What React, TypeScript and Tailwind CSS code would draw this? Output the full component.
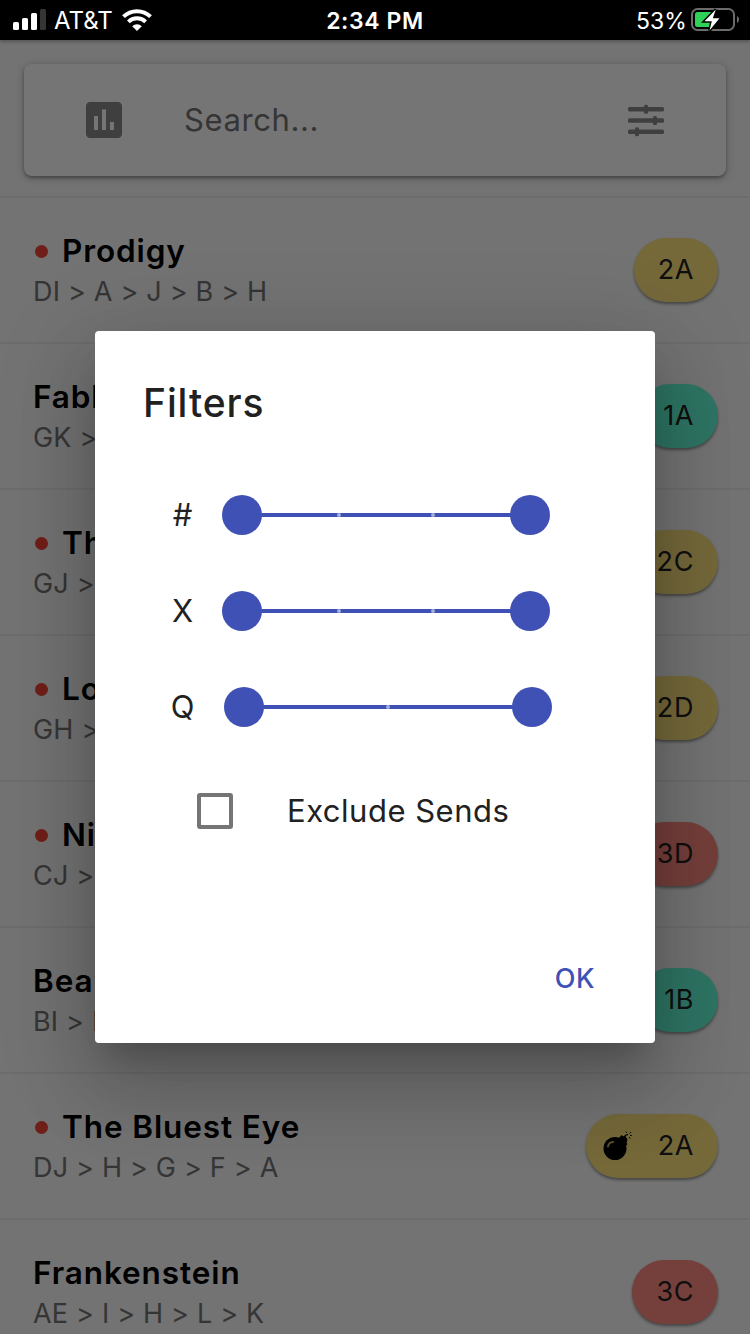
import React from "react";

type Route = { title: string; path: string; fresh?: boolean; grade: string; tone: string; width: string; bomb?: boolean };

const YELLOW = "bg-[#ffe57f]";
const TEAL = "bg-[#64ffda]";
const RED = "bg-[#ff8a80]";

const routes: Route[] = [
  { title: "Prodigy", path: "DI > A > J > B > H", fresh: true, grade: "2A", tone: YELLOW, width: "w-[84px]" },
  { title: "Fabl", path: "GK >", grade: "1A", tone: TEAL, width: "w-[80px]" },
  { title: "Th", path: "GJ >", fresh: true, grade: "2C", tone: YELLOW, width: "w-[86px]" },
  { title: "Lo", path: "GH >", fresh: true, grade: "2D", tone: YELLOW, width: "w-[86px]" },
  { title: "Ni", path: "CJ >", fresh: true, grade: "3D", tone: RED, width: "w-[86px]" },
  { title: "Beau", path: "BI > H", grade: "1B", tone: TEAL, width: "w-[80px]" },
  { title: "The Bluest Eye", path: "DJ > H > G > F > A", fresh: true, grade: "2A", tone: YELLOW, width: "w-[132px]", bomb: true },
  { title: "Frankenstein", path: "AE > I > H > L > K", grade: "3C", tone: RED, width: "w-[86px]" },
];

function StatusBar() {
  return (
    <header className="relative z-20 flex h-10 shrink-0 items-center justify-between bg-black text-white shadow-[0_2px_3px_rgba(0,0,0,0.25)]">
      <div className="flex items-center pl-[13px]">
        <svg width="33" height="22" viewBox="0 0 33 22" fill="#fff">
          <rect x="0" y="13" width="6" height="8" rx="1.5" />
          <rect x="9" y="9" width="6" height="12" rx="1.5" />
          <rect x="18" y="4" width="6" height="17" rx="1.5" />
          <rect x="27" y="0" width="6" height="21" rx="1.5" fill="#353535" />
        </svg>
        <span className="ml-2 w-[59px] pt-0.5 text-[24px] leading-[38px]">AT&amp;T</span>
        <svg className="ml-[9px]" width="30" height="22" viewBox="0 0 30 22" fill="none" stroke="#fff">
          <path d="M1.5 7.7a19.2 19.2 0 0 1 27 0" strokeWidth="4" />
          <path d="M6.4 12.9a12 12 0 0 1 17.2 0" strokeWidth="3.8" />
          <path d="M10.2 17.2a6.800 6.800 0 0 1 9.600 0L15 22z" fill="#fff" stroke="none" />
        </svg>
      </div>
      <div className="flex items-center pr-[11px]">
        <span className="pt-0.5 text-[23px] leading-[38px] tracking-[0.1px]">53%</span>
        <svg className="ml-1" width="48" height="24" viewBox="0 0 48 24">
          <rect x="1" y="1" width="42" height="21" rx="5.5" fill="none" stroke="#6b6b6b" strokeWidth="2" />
          <rect x="4" y="4" width="18" height="15" rx="2.5" fill="#30d158" />
          <path d="M46 8c1.5.7 2 2 2 3.5s-.5 2.8-2 3.5z" fill="#6b6b6b" />
          <path d="M24.8 1.5 13.5 13.3h7.3L18.5 22.5 28.5 10.3h-6.7z" fill="#fff" stroke="#000" strokeWidth="3" paintOrder="stroke" />
        </svg>
      </div>
      <div className="absolute inset-x-0 top-px text-center text-[23px] font-semibold leading-10 tracking-[0.6px]">2:34 PM</div>
    </header>
  );
}

function Bomb() {
  return (
    <svg width="30" height="30" viewBox="0 0 30 30">
      <circle cx="13" cy="17.500" r="11.500" />
      <path d="m17 7 2.500-3 1.800 1.500 1.700-1.200 2.500 4.500-1 2.500 1 2-2.500 2z" />
      <path d="M6 15.500c.5-2.800 2.200-4.200 5-4.500" fill="none" stroke="#bfac60" strokeWidth="2" strokeLinecap="round" />
      <path d="M23 5.500c1-1.800 1.800-2.200 3-1.500" fill="none" stroke="#000" strokeWidth="1.200" />
      <path d="M24 .5l.8 1.300M29 1l-1.300 1.500M28 4.500h1.800M27 6l1.200 1.600" fill="none" stroke="#000" strokeWidth="1" />
    </svg>
  );
}

function SearchBar() {
  return (
    <div className="mx-6 mt-6 flex h-28 shrink-0 items-center rounded-lg bg-white pl-14 pr-14 text-[#757575] shadow-[0_2px_3px_rgba(0,0,0,0.25),0_2px_8px_rgba(0,0,0,0.25)]">
      <svg width="48" height="48" viewBox="0 0 24 24" fill="#8a8a8a">
        <path d="M19 3H5c-1.100 0-2 .9-2 2v14c0 1.100.9 2 2 2h14c1.100 0 2-.9 2-2V5c0-1.100-.9-2-2-2zM9 17H7v-7h2v7zm4 0h-2V6.800h2V17zm4 0h-2v-4h2v4z" />
      </svg>
      <span className="ml-14 flex-1 text-[31px] tracking-[0.6px]">Search...</span>
      <svg width="48" height="48" viewBox="0 0 48 48" fill="#8a8a8a">
        <rect x="6" y="11" width="36" height="4.5" rx="1.5" />
        <rect x="6" y="22.3" width="36" height="4.5" rx="1.5" />
        <rect x="6" y="33.6" width="36" height="4.5" rx="1.5" />
        <rect x="22" y="8.8" width="4" height="9" rx="1.5" />
        <rect x="31" y="20" width="4" height="9" rx="1.5" />
        <rect x="13" y="31.3" width="4" height="9" rx="1.5" />
      </svg>
    </div>
  );
}

function RouteRow({ route }: { route: Route }) {
  return (
    <li className="flex h-[146px] shrink-0 items-center justify-between border-t-2 border-[#ededed] pl-8 pr-8">
      <div className="flex flex-col whitespace-nowrap pt-[3px]">
        <div className="flex h-10 items-center pl-px text-[31.5px] font-semibold tracking-[0.9px] text-black">
          {route.fresh && <span className="ml-[2px] mr-[14px] size-[13px] rounded-full bg-[#f44336]" />}
          {route.title}
        </div>
        <div className="h-[41px] pl-px text-[27px] leading-[42px] tracking-[0.2px] text-[#757575]">{route.path}</div>
      </div>
      <div className={`flex h-16 items-center justify-end rounded-full pr-6 text-[27px] tracking-[0.6px] text-[#222] shadow-[0_2px_3px_rgba(0,0,0,0.4)] ${route.width} ${route.tone}`}>
        {route.bomb && <span className="mr-[26px]"><Bomb /></span>}
        {route.grade}
      </div>
    </li>
  );
}

function RangeRow({ label, steps, pad, labelPad }: { label: string; steps: number; pad: string; labelPad: string }) {
  return (
    <div className={`flex h-24 items-center ${pad}`}>
      <span className={`w-[30px] text-center text-[31px] ${labelPad}`}>{label}</span>
      <div className="ml-[25px] flex w-[328px] items-center">
        <span className="size-10 rounded-full bg-[#3f51b5]" />
        <div className={`-mx-2 flex h-1 flex-1 items-center bg-[#3f51b5] px-[83px] ${steps === 1 ? "justify-center" : "justify-between"}`}>
          {Array.from({ length: steps }, (_, i) => (
            <span key={i} className="size-1 rounded-full bg-[#a6afdc]" />
          ))}
        </div>
        <span className="size-10 rounded-full bg-[#3f51b5]" />
      </div>
    </div>
  );
}

function FiltersDialog() {
  return (
    <section className="flex h-[712px] w-[560px] flex-col rounded-[4px] bg-white text-[#212121] shadow-[0_22px_30px_-14px_rgba(0,0,0,0.2),0_48px_76px_6px_rgba(0,0,0,0.14),0_18px_92px_16px_rgba(0,0,0,0.12)]">
      <h1 className="pl-12 pt-12 text-[39px] font-[450] leading-[48px] tracking-[0.9px]">Filters</h1>
      <div className="mt-10">
        <RangeRow label="#" steps={2} pad="pl-[72px]" labelPad="pl-px" />
        <RangeRow label="X" steps={2} pad="pl-[72px]" labelPad="pl-px" />
        <RangeRow label="Q" steps={1} pad="pl-[74px]" labelPad="pr-[3px]" />
      </div>
      <div className="mt-[14px] flex h-[84px] items-center pl-[102px]">
        <span className="size-9 rounded-[3px] border-4 border-[#757575]" />
        <span className="ml-[54px] text-[31px] tracking-[0.5px]">Exclude Sends</span>
      </div>
      <button className="ml-auto mr-[60px] mt-[106px] text-[27px] font-medium leading-10 tracking-[0.5px] text-[#3f51b5]">OK</button>
    </section>
  );
}

export default function App() {
  return (
    <div className="relative flex h-[1334px] w-[750px] flex-col overflow-hidden bg-[#fafafa] font-['Inter','Liberation_Sans',sans-serif]">
      <StatusBar />
      <SearchBar />
      <ul className="mt-5 flex flex-col">
        {routes.map((route) => (
          <RouteRow key={route.title} route={route} />
        ))}
      </ul>
      <div className="absolute inset-0 z-10 flex justify-center bg-black/54 pt-[331px]">
        <FiltersDialog />
      </div>
    </div>
  );
}
